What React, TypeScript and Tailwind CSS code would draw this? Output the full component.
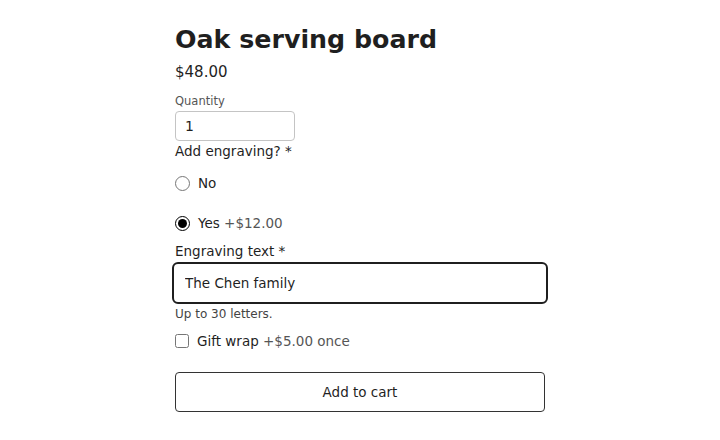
import React, { useState } from 'react';

const font = { fontFamily: '"DejaVu Sans", sans-serif' };

export default function App() {
  const [engrave, setEngrave] = useState('yes');
  const [text, setText] = useState('The Chen family');
  const [gift, setGift] = useState(false);

  return (
    <div className="min-h-[440px] bg-white text-[#1f1f1f]" style={font}>
      <div className="w-[370px] ml-[175px] pt-[24px] flex flex-col text-[13.5px]">
        <h1 className="text-[25.3px] font-bold leading-[32px]">Oak serving board</h1>
        <div className="mt-[6px] text-[15px] leading-[20px]">$48.00</div>

        <label className="mt-[12px] text-[11.5px] leading-[14px] text-[#555]">Quantity</label>
        <input
          defaultValue="1"
          className="mt-[3px] w-[120px] h-[30px] px-[9px] text-[14px] border border-[#c4c4c4] rounded-[4px] outline-none"
        />

        <div className="leading-[20px]">Add engraving? *</div>

        <label className="mt-[12px] flex items-center gap-[8px] leading-[20px]">
          <input
            type="radio"
            name="engrave"
            checked={engrave === 'no'}
            onChange={() => setEngrave('no')}
            className="w-[15px] h-[15px] m-0 accent-black"
          />
          <span>No</span>
        </label>

        <label className="mt-[20px] flex items-center gap-[8px] leading-[20px]">
          <input
            type="radio"
            name="engrave"
            checked={engrave === 'yes'}
            onChange={() => setEngrave('yes')}
            className="w-[15px] h-[15px] m-0 accent-black"
          />
          <span>
            Yes <span className="text-[#555]">+$12.00</span>
          </span>
        </label>

        <label className="mt-[8px] leading-[20px]">Engraving text *</label>
        <input
          value={text}
          onChange={(e) => setText(e.target.value)}
          className="mt-[1px] -ml-[3px] w-[376px] h-[42px] px-[11px] text-[13.5px] border-2 border-[#1f1f1f] rounded-[6px] outline-none"
        />
        <div className="mt-[2px] text-[12px] leading-[16px] text-[#444]">Up to 30 letters.</div>

        <label className="mt-[9px] flex items-center gap-[8px] leading-[20px]">
          <input
            type="checkbox"
            checked={gift}
            onChange={(e) => setGift(e.target.checked)}
            className="w-[14px] h-[14px] m-0 accent-black"
          />
          <span>
            Gift wrap <span className="text-[#555]">+$5.00 once</span>
          </span>
        </label>

        <button className="mt-[21px] h-[40px] w-[370px] border border-[#333] rounded-[4px] text-[13.5px] bg-white">
          Add to cart
        </button>
      </div>
    </div>
  );
}
